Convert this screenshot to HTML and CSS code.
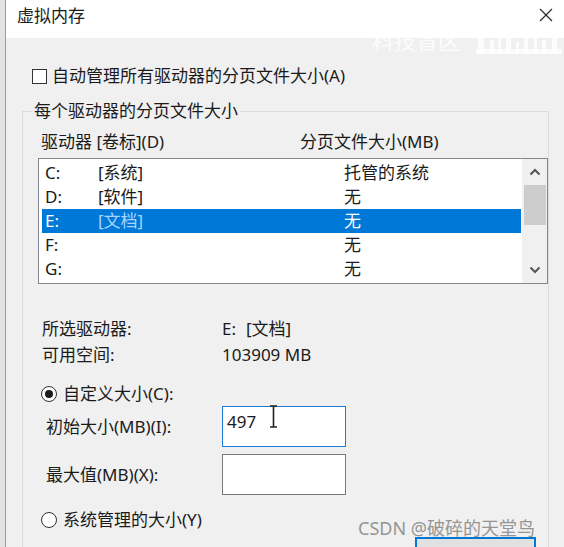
FILE: index.html
```html
<!DOCTYPE html>
<html lang="zh-CN">
<head>
<meta charset="utf-8">
<title>虚拟内存</title>
<link rel="stylesheet" href="styles.css">
</head>
<body>
<div class="window">
  <div class="edge"></div>
  <div class="dialog">
    <div class="titlebar">
      <span class="title">虚拟内存</span>
      <svg class="close" width="14" height="14" viewBox="0 0 14 14"><path d="M1 1 L13 13 M13 1 L1 13" stroke="#2b2b2b" stroke-width="1.2" fill="none"/></svg>
    </div>
    <div class="content">
      <div class="check-row"><span class="checkbox"></span><span>自动管理所有驱动器的分页文件大小(A)</span></div>
      <fieldset class="group">
        <legend>每个驱动器的分页文件大小</legend>
        <div class="list-head"><span class="head-drive">驱动器 [卷标](D)</span><span>分页文件大小(MB)</span></div>
        <div class="listbox">
          <div class="rows">
            <div class="row"><span class="c-letter">C:</span><span class="c-label">[系统]</span><span>托管的系统</span></div>
            <div class="row"><span class="c-letter">D:</span><span class="c-label">[软件]</span><span>无</span></div>
            <div class="row selected"><span class="c-letter">E:</span><span class="c-label">[文档]</span><span>无</span></div>
            <div class="row"><span class="c-letter">F:</span><span class="c-label"></span><span>无</span></div>
            <div class="row"><span class="c-letter">G:</span><span class="c-label"></span><span>无</span></div>
          </div>
          <div class="scrollbar">
            <div class="arrow"><svg width="12" height="8" viewBox="0 0 12 8"><path d="M1.5 6.5 L6 2 L10.5 6.5" stroke="#555" stroke-width="2" fill="none"/></svg></div>
            <div class="thumb"></div>
            <div class="track"></div>
            <div class="arrow"><svg width="12" height="8" viewBox="0 0 12 8"><path d="M1.5 1.5 L6 6 L10.5 1.5" stroke="#555" stroke-width="2" fill="none"/></svg></div>
          </div>
        </div>
        <div class="info">
          <div class="info-row"><span class="info-label">所选驱动器:</span><span>E:</span><span class="info-vol">[文档]</span></div>
          <div class="info-row"><span class="info-label">可用空间:</span><span>103909 MB</span></div>
        </div>
        <div class="radio-row custom"><span class="radio checked"></span><span>自定义大小(C):</span></div>
        <div class="field-row first">
          <span class="field-label">初始大小(MB)(I):</span>
          <div class="input focused">497<svg class="ibeam" width="9" height="23" viewBox="0 0 9 23"><path d="M1 1 H8 M1 22 H8 M4.5 1 V22" stroke="#222" stroke-width="1.6" fill="none"/></svg></div>
        </div>
        <div class="field-row second">
          <span class="field-label">最大值(MB)(X):</span>
          <div class="input"></div>
        </div>
        <div class="radio-row system"><span class="radio"></span><span>系统管理的大小(Y)</span></div>
        <div class="last-row">
          <div class="radio-row none"><span class="radio"></span><span>无分页文件(N)</span></div>
          <button class="set-btn">设置(S)</button>
        </div>
      </fieldset>
    </div>
  </div>
  <div class="wm-brand">
    <span>科技盲区</span>
    <svg width="86" height="34" viewBox="0 0 86 34"><g fill="#ffffff" fill-opacity="0.8"><rect x="2" y="2" width="6" height="32"/><rect x="14" y="20" width="4" height="14"/><rect x="22" y="16" width="3" height="18"/><rect x="30" y="8" width="5" height="26"/><rect x="40" y="22" width="3" height="12"/><rect x="48" y="18" width="4" height="16"/><rect x="58" y="14" width="3" height="20"/><rect x="66" y="20" width="4" height="14"/><rect x="76" y="6" width="5" height="28"/><rect x="0" y="29" width="86" height="5"/></g></svg>
  </div>
  <div class="wm-csdn">CSDN @破碎的天堂鸟</div>
</div>
</body>
</html>
```

FILE: styles.css
```css
html, body {
  margin: 0;
  padding: 0;
}
body {
  width: 564px;
  height: 547px;
  overflow: hidden;
  background: #f0f0f0;
  font-family: "Noto Sans", "Noto Sans CJK SC", sans-serif;
  font-size: 17px;
  line-height: 22px;
  color: #1b1b1b;
}
.window {
  position: relative;
  display: flex;
  height: 547px;
  overflow: hidden;
}
.edge {
  width: 5px;
  flex: none;
  background: #e3e3e3;
  border-right: 1px solid #9a9a9a;
}
.dialog {
  flex: 1;
  display: flex;
  flex-direction: column;
}
.titlebar {
  flex: none;
  height: 38px;
  background: #ffffff;
  display: flex;
  justify-content: space-between;
  align-items: flex-start;
  padding: 5px 14px 0 11px;
  box-sizing: border-box;
}
.title {
  font-size: 17px;
  line-height: 22px;
}
.close {
  margin-top: 3px;
}
.content {
  flex: none;
  padding: 0 18px 0 16px;
}
.check-row {
  margin-top: 27px;
  padding-left: 10px;
  display: flex;
  align-items: center;
  gap: 5px;
  height: 22px;
}
.checkbox {
  width: 15px;
  height: 15px;
  box-sizing: border-box;
  border: 1px solid #333;
  background: #fff;
}
.group {
  margin: 13px 0 0 0;
  padding: 0 0 20px 15px;
  border: 1px solid #dcdcdc;
  min-width: 0;
}
.group legend {
  margin-left: -6px;
  padding: 0 2px;
  line-height: 22px;
}
.list-head {
  margin-top: 9px;
  display: flex;
  height: 22px;
}
.head-drive {
  width: 259px;
  padding-left: 3px;
}
.listbox {
  margin-top: 5px;
  width: 510px;
  height: 126px;
  box-sizing: border-box;
  border: 1px solid #828790;
  background: #fff;
  display: flex;
}
.rows {
  width: 479px;
  padding: 2px 0 0 3px;
}
.row {
  display: flex;
  height: 24px;
  line-height: 24px;
}
.c-letter {
  width: 53px;
  padding-left: 3px;
  box-sizing: border-box;
}
.c-label {
  width: 246px;
  padding-left: 3px;
}
.row.selected {
  background: #0078d7;
  color: #ffffff;
}
.row.selected .c-label {
  color: #a6d6ff;
}
.scrollbar {
  margin-left: 1px;
  width: 25px;
  background: #f0f0f0;
  display: flex;
  flex-direction: column;
}
.arrow {
  height: 26px;
  display: flex;
  align-items: center;
  justify-content: center;
}
.thumb {
  height: 40px;
  margin: 0 1px 0 2px;
  background: #cdcdcd;
}
.track {
  flex: 1;
}
.info {
  margin-top: 32px;
  padding-left: 4px;
}
.info-row {
  display: flex;
  line-height: 26px;
}
.info-label {
  width: 180px;
}
.info-vol {
  margin-left: 10px;
}
.radio-row {
  display: flex;
  align-items: center;
  gap: 6px;
  padding-left: 3px;
  height: 22px;
}
.radio {
  width: 16px;
  height: 16px;
  box-sizing: border-box;
  border: 1px solid #333;
  border-radius: 50%;
  background: #fff;
  display: flex;
  align-items: center;
  justify-content: center;
}
.radio.checked::after {
  content: "";
  width: 8px;
  height: 8px;
  border-radius: 50%;
  background: #1b1b1b;
}
.custom {
  margin-top: 15px;
}
.field-row {
  display: flex;
  align-items: center;
  padding-left: 8px;
}
.field-row.first {
  margin-top: 1px;
}
.field-row.second {
  margin-top: 7px;
}
.field-label {
  width: 176px;
}
.input {
  position: relative;
  width: 124px;
  height: 41px;
  box-sizing: border-box;
  border: 1px solid #7a7a7a;
  background: #fff;
  padding: 4px 0 0 4px;
}
.input.focused {
  border-color: #1a7ad4;
}
.ibeam {
  position: absolute;
  left: 46px;
  top: -2px;
}
.system {
  margin-top: 14px;
}
.last-row {
  margin-top: 6px;
  display: flex;
  align-items: flex-start;
  justify-content: space-between;
  padding-right: 12px;
}
.radio-row.none {
  margin-top: 10px;
}
.set-btn {
  width: 121px;
  height: 40px;
  border: 2px solid #0078d7;
  background: #e1e1e1;
  font: inherit;
  color: #1b1b1b;
  padding: 0;
}
.wm-csdn {
  position: absolute;
  left: 358px;
  top: 516px;
  font-size: 18px;
  line-height: 24px;
  color: #959595;
  white-space: nowrap;
}
.wm-brand {
  position: absolute;
  left: 372px;
  top: 20px;
  display: flex;
  align-items: flex-end;
  gap: 16px;
  color: rgba(255, 255, 255, 0.85);
  font-size: 22px;
  line-height: 30px;
  white-space: nowrap;
  font-family: "Noto Sans CJK SC", sans-serif;
}
```
